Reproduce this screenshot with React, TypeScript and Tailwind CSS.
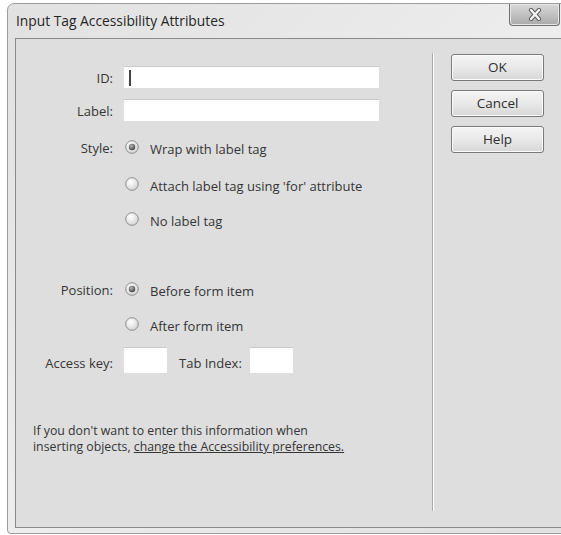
import React from "react";

const font = { fontFamily: '"Open Sans", "Noto Sans", sans-serif' };

function Radio({ checked }: { checked?: boolean }) {
  return (
    <svg width="14" height="14" viewBox="0 0 14 14" className="shrink-0">
      <defs>
        <radialGradient id={checked ? "rg-on" : "rg-off"} cx="40%" cy="35%" r="70%">
          <stop offset="0%" stopColor="#ffffff" />
          <stop offset="100%" stopColor="#d2d2d2" />
        </radialGradient>
        <radialGradient id="dot" cx="40%" cy="35%" r="70%">
          <stop offset="0%" stopColor="#b8b8b8" />
          <stop offset="100%" stopColor="#3c3c3c" />
        </radialGradient>
      </defs>
      <circle cx="7" cy="7" r="6.3" fill={`url(#${checked ? "rg-on" : "rg-off"})`} stroke="#8e8e8e" strokeWidth="1" />
      {checked && <circle cx="7" cy="7" r="3.2" fill="url(#dot)" />}
    </svg>
  );
}

function RadioRow({ label, checked, className }: { label: string; checked?: boolean; className?: string }) {
  return (
    <div className={`flex h-[20px] items-center gap-[11px] pl-[1px] ${className ?? ""}`}>
      <Radio checked={checked} />
      <span className="pt-[5px] text-[13px] leading-none text-[#353535]">{label}</span>
    </div>
  );
}

function DialogButton({ label, className }: { label: string; className?: string }) {
  return (
    <button
      className={`h-[27px] w-[93px] rounded-[3px] border border-[#7a7a7a] bg-gradient-to-b from-[#f4f4f4] via-[#e9e9e9] to-[#d6d6d6] text-[13.5px] leading-none text-[#2e2e2e] shadow-[inset_0_0_0_1px_#fbfbfb] ${className ?? ""}`}
    >
      {label}
    </button>
  );
}

function TextBox({ className, caret }: { className?: string; caret?: boolean }) {
  return (
    <div className={`flex items-center border-t border-t-[#c9c9c9] bg-white ${className ?? ""}`}>
      {caret && <div className="ml-[5px] h-[16px] w-[2px] bg-[#444]" />}
    </div>
  );
}

function FieldLabel({ children, className }: { children: React.ReactNode; className?: string }) {
  return <div className={`text-right leading-none ${className ?? ""}`}>{children}</div>;
}

export default function App() {
  return (
    <div className="h-[535px] w-[561px] overflow-hidden bg-white" style={font}>
      {/* window frame */}
      <div className="ml-[7px] mt-[3px] flex h-[531px] w-[575px] flex-col rounded-t-[7px] rounded-bl-[4px] border border-[#9c9c9c] bg-gradient-to-br from-[#e1e1e1] via-[#ededed] to-[#e0e0e0] px-[7px] pb-[5px]">
        {/* title bar */}
        <div className="flex h-[34px] shrink-0 items-start justify-between">
          <div className="pl-[1px] pt-[7px] text-[13.8px] text-[#262626]">Input Tag Accessibility Attributes</div>
          <div className="mr-[14px] flex h-[22px] w-[51px] items-center justify-center rounded-b-[4px] border border-t-0 border-[#6f6f6f] bg-gradient-to-b from-[#d9d9d9] via-[#c2c2c2] to-[#a9a9a9] shadow-[inset_0_0_0_1px_#e6e6e6]">
            <svg width="16" height="13" viewBox="0 0 16 13">
              <path d="M4 2 L12 11 M12 2 L4 11" stroke="#5a5a5a" strokeWidth="4.2" strokeLinecap="round" fill="none" />
              <path d="M4 2 L12 11 M12 2 L4 11" stroke="#f4f4f4" strokeWidth="2.4" strokeLinecap="round" fill="none" />
            </svg>
          </div>
        </div>

        {/* client area */}
        <div className="flex flex-1 border border-[#8a8a8a] bg-[#dedede]">
          {/* form column */}
          <div className="w-[416px] shrink-0 pt-[27px]">
            <div className="grid grid-cols-[97px_1fr] items-center gap-x-[11px] text-[13px] text-[#353535]">
              <FieldLabel className="pt-[3px]">ID:</FieldLabel>
              <TextBox caret className="h-[22px] w-[255px]" />

              <FieldLabel className="mt-[11px] pt-[3px]">Label:</FieldLabel>
              <TextBox className="mt-[11px] h-[22px] w-[255px]" />

              <FieldLabel className="mt-[16px] pt-[3px]">Style:</FieldLabel>
              <RadioRow className="mt-[16px]" label="Wrap with label tag" checked />
              <div />
              <RadioRow className="mt-[17px]" label="Attach label tag using 'for' attribute" />
              <div />
              <RadioRow className="mt-[15px]" label="No label tag" />

              <FieldLabel className="mt-[50px] pt-[3px]">Position:</FieldLabel>
              <RadioRow className="mt-[50px]" label="Before form item" checked />
              <div />
              <RadioRow className="mt-[15px]" label="After form item" />

              <FieldLabel className="mt-[13px] pt-[6px]">Access key:</FieldLabel>
              <div className="mt-[13px] flex items-center">
                <TextBox className="h-[26px] w-[43px]" />
                <span className="ml-[12px] mr-[8px] pt-[6px] leading-none">Tab Index:</span>
                <TextBox className="h-[26px] w-[43px]" />
              </div>
            </div>

            <p className="ml-[17px] mt-[50px] text-[12.3px] leading-[16px] text-[#353535]">
              If you don&apos;t want to enter this information when
              <br />
              inserting objects, <span className="underline">change the Accessibility preferences.</span>
            </p>
          </div>

          {/* divider */}
          <div className="mb-[16px] mt-[14px] w-[2px] shrink-0 border-l border-[#a9a9a9] bg-white" />

          {/* buttons */}
          <div className="flex flex-col gap-[9px] pl-[17px] pt-[15px]">
            <DialogButton label="OK" />
            <DialogButton label="Cancel" />
            <DialogButton label="Help" />
          </div>
        </div>
      </div>
    </div>
  );
}
